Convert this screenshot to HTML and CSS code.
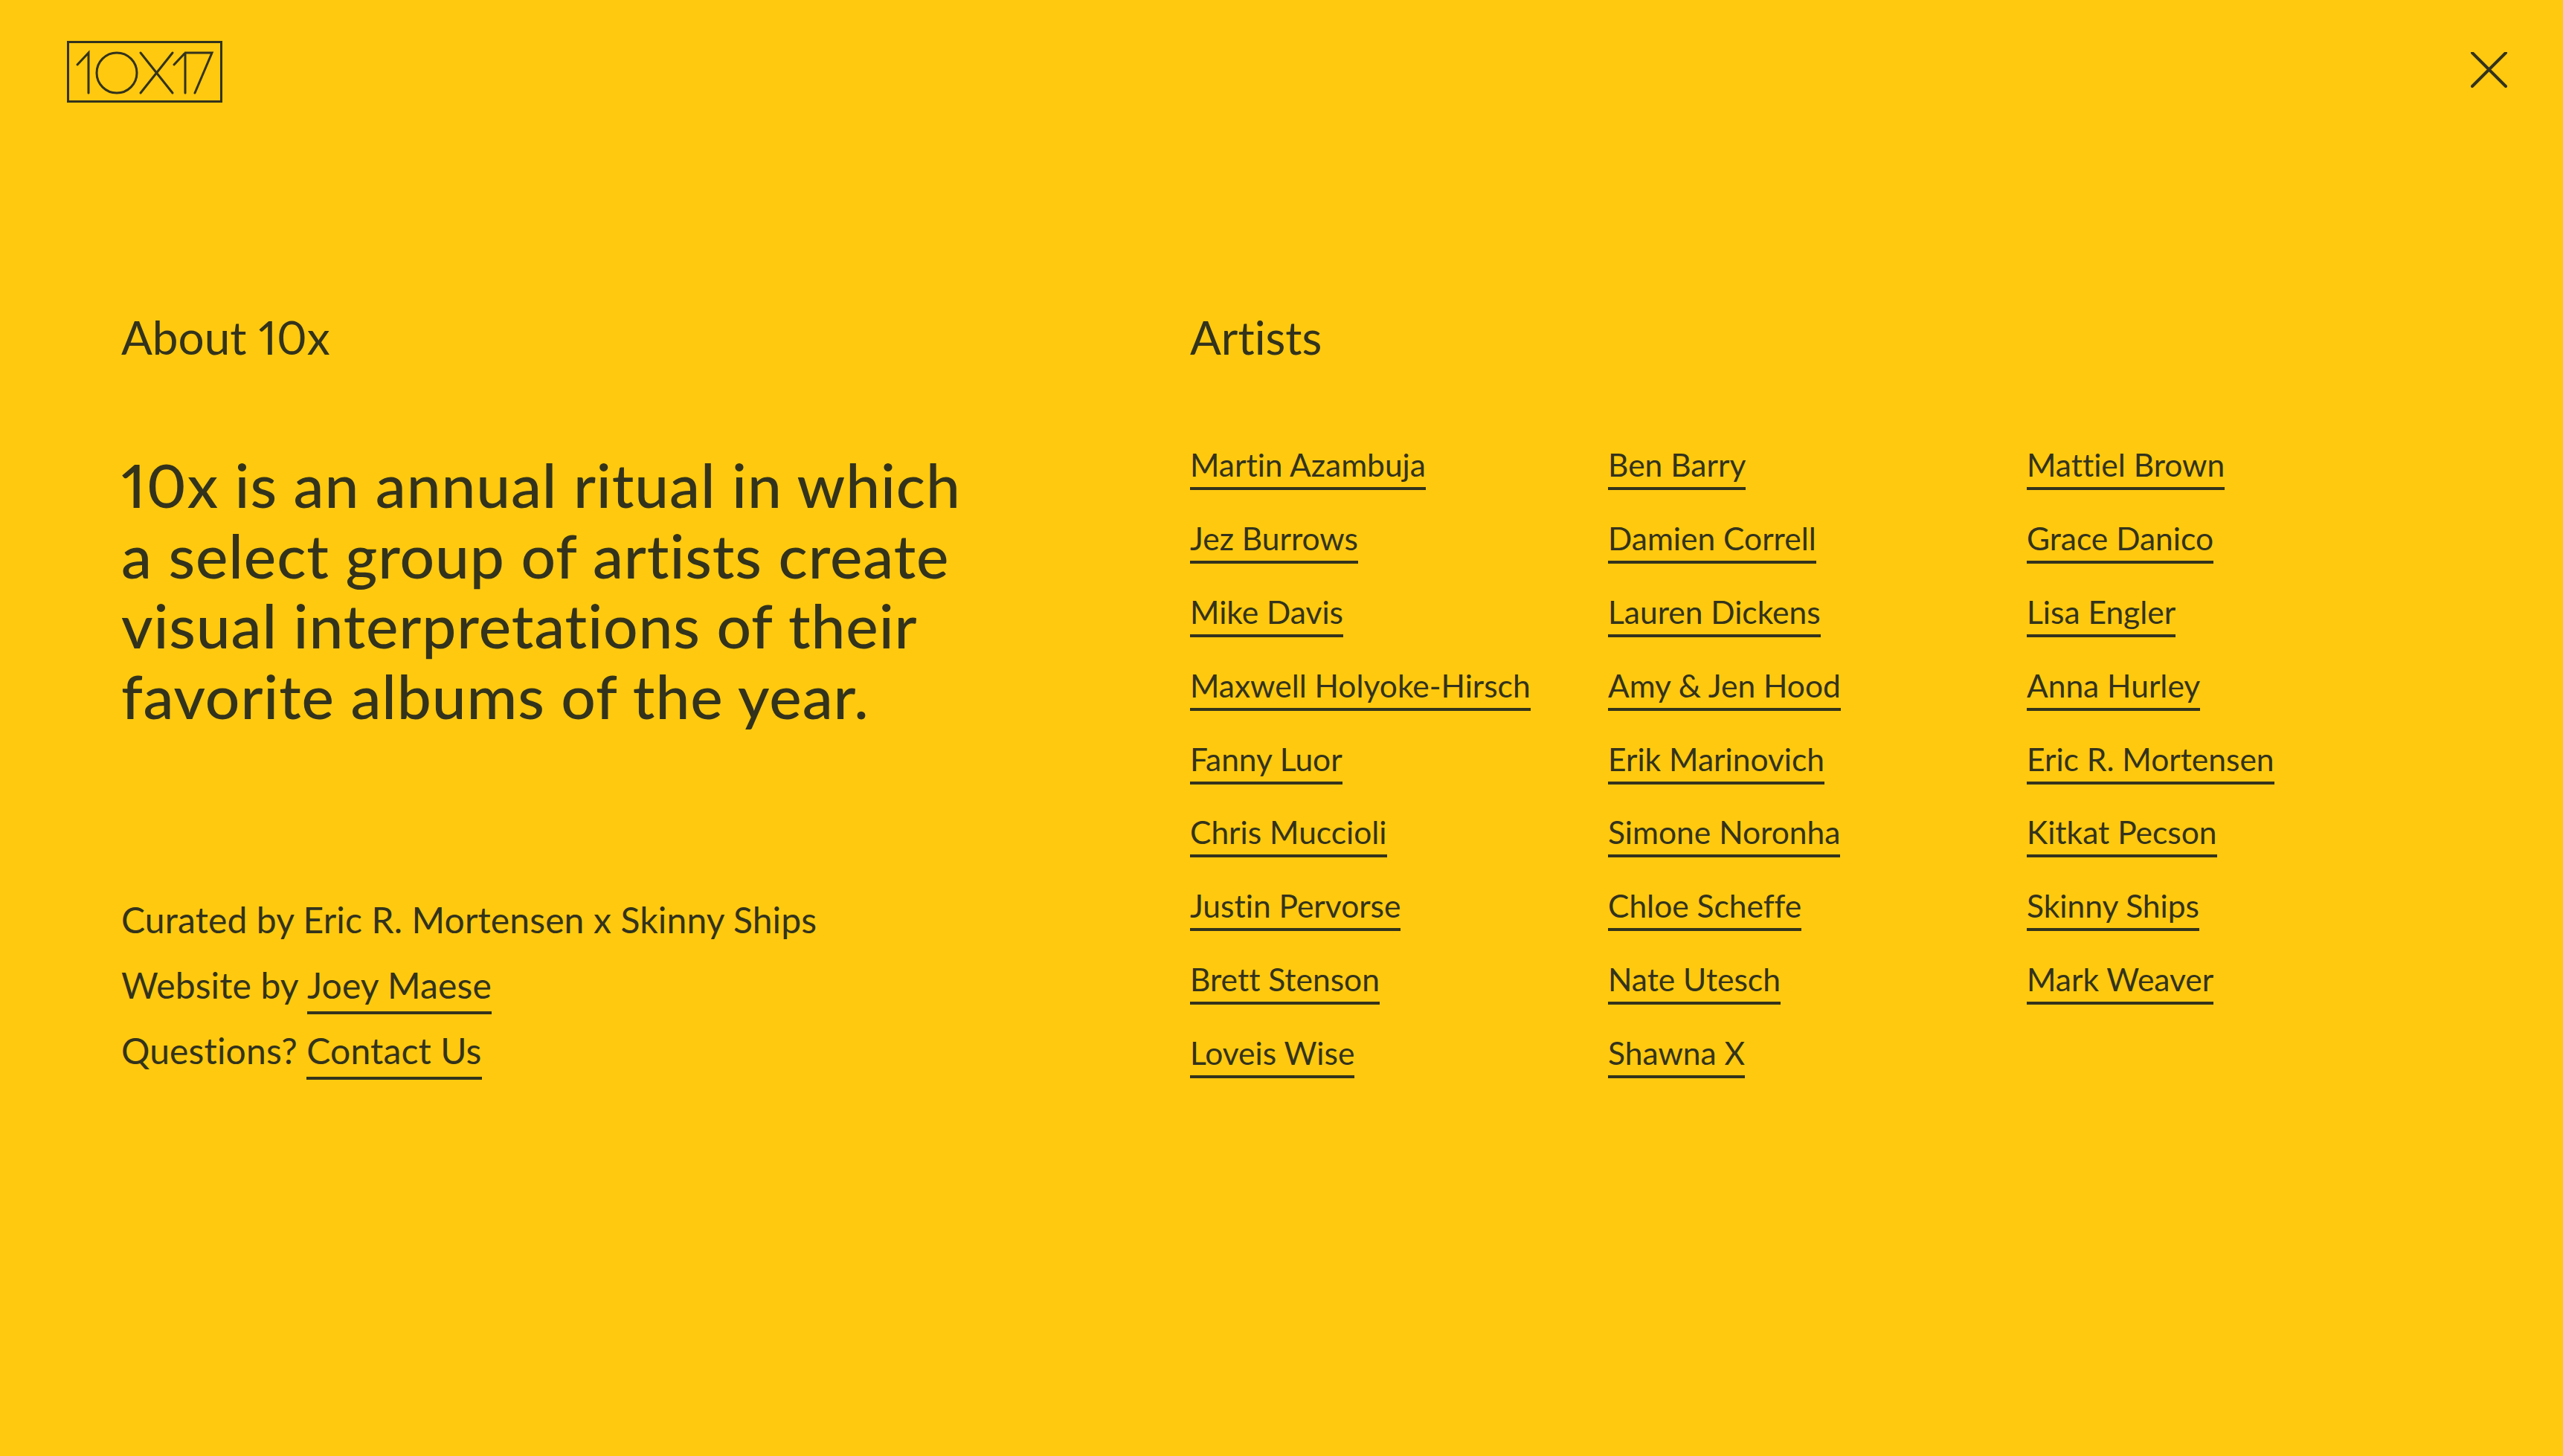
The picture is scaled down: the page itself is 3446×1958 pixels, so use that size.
FILE: index.html
```html
<!DOCTYPE html>
<html lang="en">
<head>
<meta charset="utf-8">
<title>10x17 About</title>
<link rel="stylesheet" href="styles.css">
</head>
<body>
<div class="page">
  <header class="topbar">
    <a class="logo" href="#" aria-label="10X17">
      <svg width="209" height="83" viewBox="0 0 209 83" fill="none" stroke="#33331c" stroke-width="3" stroke-linecap="round" stroke-linejoin="miter">
        <rect x="1.5" y="1.5" width="206" height="80"/>
        <path d="M14 32 L29 16 V70"/>
        <circle cx="67" cy="43" r="27"/>
        <path d="M99 16 L142 70 M142 16 L99 70"/>
        <path d="M144 32 L159 16 H195 L172 70 M159 16 V70"/>
      </svg>
    </a>
    <button class="close" aria-label="Close">
      <svg width="50" height="50" viewBox="0 0 50 50" fill="none" stroke="#33331c" stroke-width="4" stroke-linecap="round">
        <path d="M2 1 L47 46 M47 1 L2 46"/>
      </svg>
    </button>
  </header>
  <main class="content">
    <section class="about">
      <h2 class="heading">About 10x</h2>
      <p class="statement">10x is an annual ritual in which<br>a select group of artists create<br>visual interpretations of their<br>favorite albums of the year.</p>
      <div class="credits">
        <p>Curated by Eric R. Mortensen x Skinny Ships</p>
        <p>Website by <a href="#">Joey Maese</a></p>
        <p>Questions? <a href="#">Contact Us</a></p>
      </div>
    </section>
    <section class="artists">
      <h2 class="heading">Artists</h2>
      <ul class="grid">
        <li><a href="#">Martin Azambuja</a></li>
        <li><a href="#">Ben Barry</a></li>
        <li><a href="#">Mattiel Brown</a></li>
        <li><a href="#">Jez Burrows</a></li>
        <li><a href="#">Damien Correll</a></li>
        <li><a href="#">Grace Danico</a></li>
        <li><a href="#">Mike Davis</a></li>
        <li><a href="#">Lauren Dickens</a></li>
        <li><a href="#">Lisa Engler</a></li>
        <li><a href="#">Maxwell Holyoke-Hirsch</a></li>
        <li><a href="#">Amy &amp; Jen Hood</a></li>
        <li><a href="#">Anna Hurley</a></li>
        <li><a href="#">Fanny Luor</a></li>
        <li><a href="#">Erik Marinovich</a></li>
        <li><a href="#">Eric R. Mortensen</a></li>
        <li><a href="#">Chris Muccioli</a></li>
        <li><a href="#">Simone Noronha</a></li>
        <li><a href="#">Kitkat Pecson</a></li>
        <li><a href="#">Justin Pervorse</a></li>
        <li><a href="#">Chloe Scheffe</a></li>
        <li><a href="#">Skinny Ships</a></li>
        <li><a href="#">Brett Stenson</a></li>
        <li><a href="#">Nate Utesch</a></li>
        <li><a href="#">Mark Weaver</a></li>
        <li><a href="#">Loveis Wise</a></li>
        <li><a href="#">Shawna X</a></li>
      </ul>
    </section>
  </main>
</div>
</body>
</html>
```
FILE: styles.css
```css
* { box-sizing: border-box; }
html, body { margin: 0; padding: 0; }
body {
  background: #ffc90f;
  color: #33331c;
  font-family: "Lato", "Open Sans", sans-serif;
  font-weight: 400;
  font-variant-ligatures: none;
  font-feature-settings: "pnum" 1;
}
a { color: inherit; text-decoration: none; }
.page {
  width: 3446px;
  height: 1958px;
  overflow: hidden;
}
.topbar {
  display: flex;
  justify-content: space-between;
  align-items: flex-start;
  padding: 55px 74px 0 90px;
}
.logo { display: block; height: 83px; }
.logo svg, .close svg { display: block; }
.close {
  display: block;
  margin-top: 15px;
  padding: 0;
  border: 0;
  background: none;
}
.content {
  display: flex;
  padding: 279px 0 0 163px;
}
.about { width: 1437px; }
.heading {
  margin: 0;
  font-size: 62px;
  line-height: 72px;
  font-weight: 400;
}
.statement {
  margin: 115px 0 0;
  font-size: 82px;
  font-weight: 500;
  line-height: 94.500px;
  letter-spacing: 0.9px;
}
.credits { margin-top: 211px; }
.credits p {
  margin: 0;
  font-size: 48px;
  line-height: 88px;
  height: 88px;
  letter-spacing: 0.15px;
}
.credits a {
  display: inline-block;
  line-height: 70px;
  border-bottom: 4px solid #33331c;
}
.grid {
  display: grid;
  grid-template-columns: 562px 563px 400px;
  grid-auto-rows: 98.900px;
  margin: 106px 0 0;
  padding: 0;
  list-style: none;
}
.grid a {
  display: inline-block;
  font-size: 42.500px;
  line-height: 60px;
  border-bottom: 4px solid #33331c;
}
```
